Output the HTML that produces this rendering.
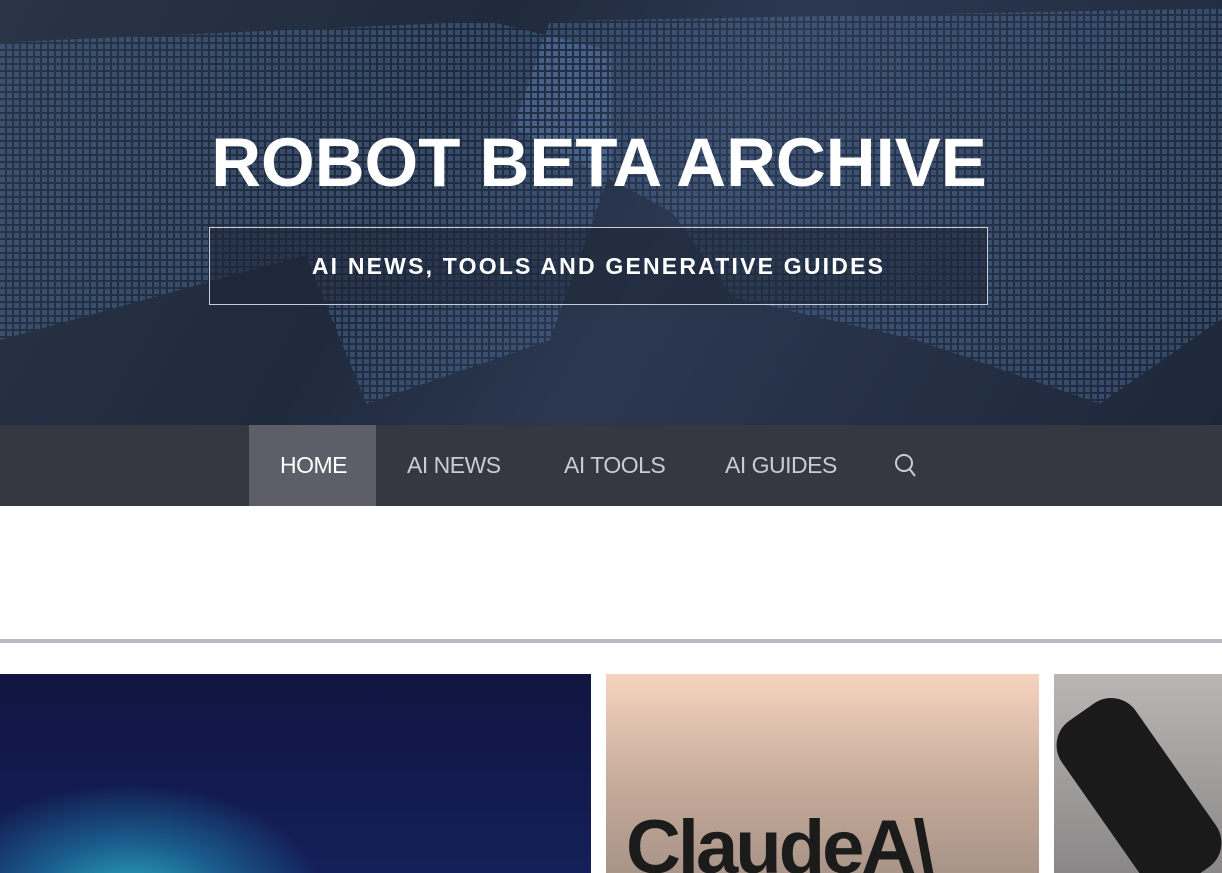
<!DOCTYPE html>
<html><head><style>
*{margin:0;padding:0;box-sizing:border-box}
body{width:1222px;height:873px;overflow:hidden;background:#fff;font-family:"Liberation Sans",sans-serif}
.hero{position:absolute;left:0;top:0;width:1222px;height:425px;background:linear-gradient(120deg,#2a3447 0%,#1f2a3d 35%,#2b3850 55%,#1d2739 100%);overflow:hidden}
.dots{position:absolute;inset:0;background-image:linear-gradient(90deg,rgba(100,140,195,.75) 5px,transparent 5px);background-size:7px 7px;-webkit-mask:linear-gradient(transparent 2px,#000 2px) 0 0/7px 7px;mask:linear-gradient(transparent 2px,#000 2px) 0 0/7px 7px;opacity:.45}
h1{position:absolute;left:0;width:1198px;top:123px;text-align:center;color:#fff;font-size:69px;font-weight:bold}
.sub{position:absolute;left:209px;top:227px;width:779px;height:78px;border:1px solid #c8ccd4;background:rgba(30,38,54,.55);color:#fff;font-size:23px;font-weight:bold;letter-spacing:2.2px;text-align:center;line-height:76px}
nav{position:absolute;top:425px;left:0;width:1222px;height:81px;background:#353840}
nav a{position:absolute;top:0;height:81px;line-height:81px;color:#c9ccd2;font-size:23px;text-decoration:none;letter-spacing:-0.5px}
.hr{position:absolute;top:639px;left:0;width:1222px;height:4px;background:#b9bbc4}
.c1{position:absolute;left:0;top:674px;width:591px;height:199px;background:radial-gradient(ellipse 260px 160px at 130px 230px,#2cb5c7 0%,#1a5a8a 40%,transparent 75%),linear-gradient(#111541,#14205a)}
.c2{position:absolute;left:606px;top:674px;width:433px;height:199px;background:linear-gradient(#f6d3bf,#c2a898 60%,#a99488);overflow:hidden}
.c3{position:absolute;left:1054px;top:674px;width:168px;height:199px;background:linear-gradient(#b9b6b5,#898787);overflow:hidden}
</style></head><body>
<div class="hero">
<div class="dots" style="clip-path:polygon(0 10%,40% 5%,50% 12%,50% 40%,45% 80%,30% 95%,25% 60%,0 80%)"></div>
<div class="dots" style="clip-path:polygon(45% 5%,100% 2%,100% 75%,90% 95%,75% 80%,60% 70%,55% 50%,42% 30%)"></div>
<h1>ROBOT BETA ARCHIVE</h1>
<div class="sub">AI NEWS, TOOLS AND GENERATIVE GUIDES</div>
</div>
<nav>
<div style="position:absolute;left:249px;top:0;width:127px;height:81px;background:#5e5e69"></div>
<a style="left:280px;color:#fff">HOME</a>
<a style="left:407px">AI NEWS</a>
<a style="left:564px">AI TOOLS</a>
<a style="left:725px">AI GUIDES</a>
<svg style="position:absolute;left:894px;top:28px" width="24" height="26" viewBox="0 0 24 26"><circle cx="10" cy="10" r="8" fill="none" stroke="#c9ccd2" stroke-width="2"/><path d="M15.5 16 L21 23" stroke="#c9ccd2" stroke-width="2"/></svg>
</nav>
<div class="hr"></div>
<div class="c1"></div>
<div class="c2"><div style="position:absolute;left:20px;top:130px;font-size:76px;font-weight:bold;color:#1b1b1b;letter-spacing:-3px">ClaudeA\</div></div>
<div class="c3"><div style="position:absolute;left:40px;top:20px;width:90px;height:200px;background:#1a1a1a;border-radius:30px;transform:rotate(-35deg)"></div></div>
</body></html>
